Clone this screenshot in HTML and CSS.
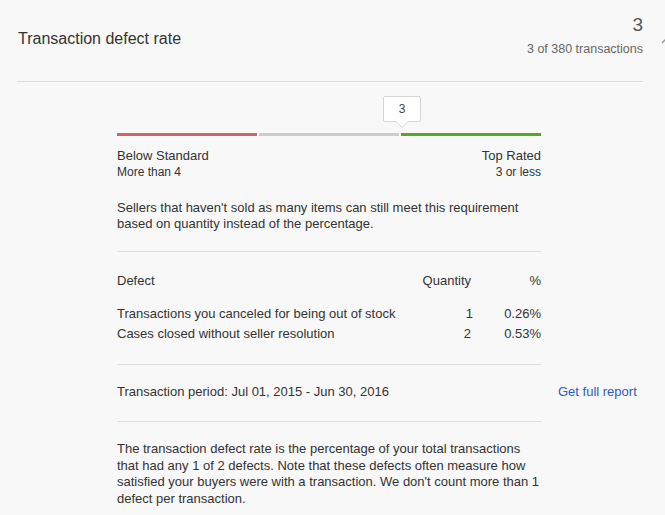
FILE: index.html
```html
<!DOCTYPE html>
<html>
<head>
<meta charset="utf-8">
<link rel="stylesheet" href="styles.css">
</head>
<body>
<div class="card">
  <div class="header">
    <div class="title">Transaction defect rate</div>
    <div class="summary">
      <div class="big">3</div>
      <div class="sub">3 of 380 transactions</div>
    </div>
    <svg class="chev" width="10" height="10" viewBox="0 0 10 10"><path d="M1 8 L5 4 L9 8" fill="none" stroke="#999" stroke-width="1.5"/></svg>
  </div>
  <div class="content">
    <div class="col">
      <div class="tip">3</div>
      <div class="bars">
        <div class="seg red"></div>
        <div class="seg gray"></div>
        <div class="seg green"></div>
      </div>
      <div class="labels">
        <div>
          <div class="lab">Below Standard</div>
          <div class="labsub">More than 4</div>
        </div>
        <div class="right">
          <div class="lab">Top Rated</div>
          <div class="labsub">3 or less</div>
        </div>
      </div>
      <p class="note">Sellers that haven't sold as many items can still meet this requirement based on quantity instead of the percentage.</p>
      <div class="table">
        <div class="row head"><span class="c1">Defect</span><span class="c2">Quantity</span><span class="c3">%</span></div>
        <div class="rows">
          <div class="row"><span class="c1">Transactions you canceled for being out of stock</span><span class="c2">1</span><span class="c3">0.26%</span></div>
          <div class="row"><span class="c1">Cases closed without seller resolution</span><span class="c2">2</span><span class="c3">0.53%</span></div>
        </div>
      </div>
    </div>
    <div class="period-row">
      <div class="period">Transaction period: Jul 01, 2015 - Jun 30, 2016</div>
      <a class="link" href="#">Get full report</a>
    </div>
    <div class="col">
      <p class="desc">The transaction defect rate is the percentage of your total transactions that had any 1 of 2 defects. Note that these defects often measure how satisfied your buyers were with a transaction. We don't count more than 1 defect per transaction.</p>
    </div>
  </div>
</div>
</body>
</html>
```
FILE: styles.css
```css
html, body {
  margin: 0;
  padding: 0;
  background: #f8f8f8;
  overflow: hidden;
}
body {
  font-family: "Liberation Sans", Arial, sans-serif;
  color: #333;
  font-size: 13px;
}
.card {
  padding: 0 22px 0 17px;
}
.header {
  display: flex;
  align-items: flex-start;
  height: 82px;
  border-bottom: 1px solid #ddd;
  padding-top: 14px;
  box-sizing: border-box;
  position: relative;
}
.title {
  font-size: 16px;
  line-height: 20px;
  margin-top: 15px;
  padding-left: 1px;
  flex: 1;
}
.summary {
  text-align: right;
}
.big {
  font-size: 19px;
  line-height: 22px;
  color: #555;
}
.sub {
  font-size: 12.5px;
  line-height: 16px;
  margin-top: 5px;
  color: #666;
}
.chev {
  position: absolute;
  right: -22px;
  top: 35px;
  margin-right: -6px;
}
.content {
  padding-left: 100px;
}
.col {
  width: 424px;
}
.tip {
  position: relative;
  width: 36px;
  height: 24px;
  margin: 14px 0 0 266px;
  border: 1px solid #d4d4d4;
  border-radius: 2px;
  background: #fff;
  text-align: center;
  line-height: 24px;
  font-size: 12px;
  color: #444;
}
.tip::before, .tip::after {
  content: "";
  position: absolute;
  left: 50%;
  width: 0;
  height: 0;
  border-style: solid;
}
.tip::before {
  top: 24px;
  margin-left: -7px;
  border-width: 7px 7px 0 7px;
  border-color: #d4d4d4 transparent transparent transparent;
}
.tip::after {
  top: 24px;
  margin-left: -6px;
  border-width: 6px 6px 0 6px;
  border-color: #fff transparent transparent transparent;
}
.bars {
  display: flex;
  gap: 2px;
  margin-top: 11px;
}
.seg {
  flex: 1;
  height: 3px;
}
.red { background: #cd666b; }
.gray { background: #cccccc; }
.green { background: #5ba524; }
.labels {
  display: flex;
  justify-content: space-between;
  margin-top: 12px;
}
.right { text-align: right; }
.lab {
  font-size: 13px;
  line-height: 16px;
}
.labsub {
  font-size: 12px;
  line-height: 16px;
}
.note {
  margin: 20px 0 0;
  line-height: 16px;
  padding-bottom: 19px;
  border-bottom: 1px solid #ddd;
}
.table {
  padding-top: 21px;
  padding-bottom: 20px;
  border-bottom: 1px solid #ddd;
}
.row {
  display: flex;
  line-height: 20px;
  white-space: nowrap;
}
.row.head {
  line-height: 16px;
  margin-bottom: 15px;
}
.c1 { flex: 1; }
.c2 { width: 80px; text-align: right; }
.c3 { width: 70px; text-align: right; }
.period-row {
  display: flex;
  align-items: flex-start;
}
.period {
  width: 424px;
  box-sizing: border-box;
  padding: 19px 0 21px;
  line-height: 16px;
  border-bottom: 1px solid #ddd;
}
.link {
  margin-left: 17px;
  padding-top: 19px;
  line-height: 16px;
  color: #2b5bc8;
  text-decoration: none;
}
.desc {
  margin: 19px 0 0;
  line-height: 16.5px;
}
```
